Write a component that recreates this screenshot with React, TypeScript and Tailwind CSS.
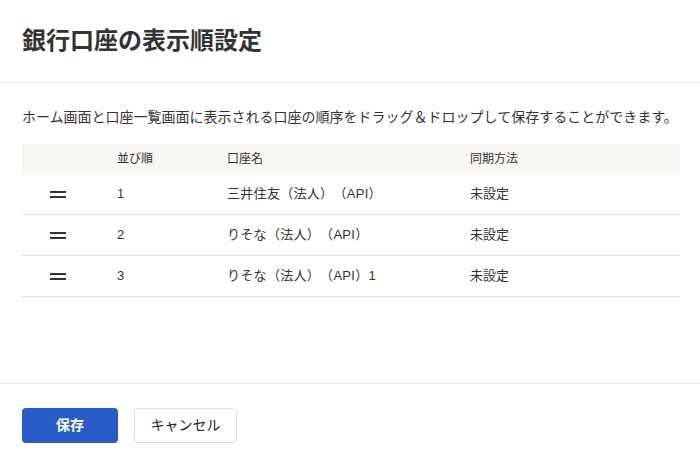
import React from "react";

type Account = {
  order: number;
  name: string;
  sync: string;
};

const ACCOUNTS: Account[] = [
  { order: 1, name: "三井住友（法人）（API）", sync: "未設定" },
  { order: 2, name: "りそな（法人）（API）", sync: "未設定" },
  { order: 3, name: "りそな（法人）（API）1", sync: "未設定" },
];

const font = {
  fontFamily: '"Liberation Sans", "Noto Sans CJK JP", sans-serif',
};

// drag handle (two bars)
const DragHandle = () => (
  <span className="flex flex-col gap-[3px] w-4 cursor-move">
    <span className="block h-[2px] w-4 bg-[#333]" />
    <span className="block h-[2px] w-4 bg-[#333]" />
  </span>
);

export default function App() {
  return (
    <div
      className="flex h-[465px] w-[700px] flex-col bg-white text-[#333] [text-spacing-trim:space-all]"
      style={font}
    >
      <div className="h-[83px] border-b border-[#e6e6e6] px-[22px] pt-[25px]">
        <h1 className="text-[24px] font-bold leading-[32px] text-[#333]">銀行口座の表示順設定</h1>
      </div>

      <div className="flex-1 px-[22px] pt-[24px]">
        <p className="text-[14px] leading-[20px] whitespace-nowrap">
          ホーム画面と口座一覧画面に表示される口座の順序をドラッグ＆ドロップして保存することができます。
        </p>

        <div className="mt-[17px] w-[658px]">
          <div className="grid h-[30px] grid-cols-[95px_110px_243px_1fr] items-center bg-[#f7f6f3] text-[12px]">
            <span />
            <span>並び順</span>
            <span>口座名</span>
            <span>同期方法</span>
          </div>
          {ACCOUNTS.map((account) => (
            <div
              key={account.order}
              className="grid h-[41px] grid-cols-[95px_110px_243px_1fr] items-center border-b border-[#e3e0d8] text-[13px]"
            >
              <span className="pl-[28px]">
                <DragHandle />
              </span>
              <span>{account.order}</span>
              <span className="tracking-[0.3px]">{account.name}</span>
              <span>{account.sync}</span>
            </div>
          ))}
        </div>
      </div>

      <div className="flex h-[82px] gap-4 border-t border-[#e6e6e6] px-[22px] pt-[24px]">
        <button className="h-[35px] w-[96px] rounded-[4px] bg-[#2a5cc8] text-[14px] font-bold text-white">
          保存
        </button>
        <button className="h-[35px] w-[103px] rounded-[4px] border border-[#dcdcdc] bg-white text-[14px] font-normal text-[#222]">
          キャンセル
        </button>
      </div>
    </div>
  );
}
